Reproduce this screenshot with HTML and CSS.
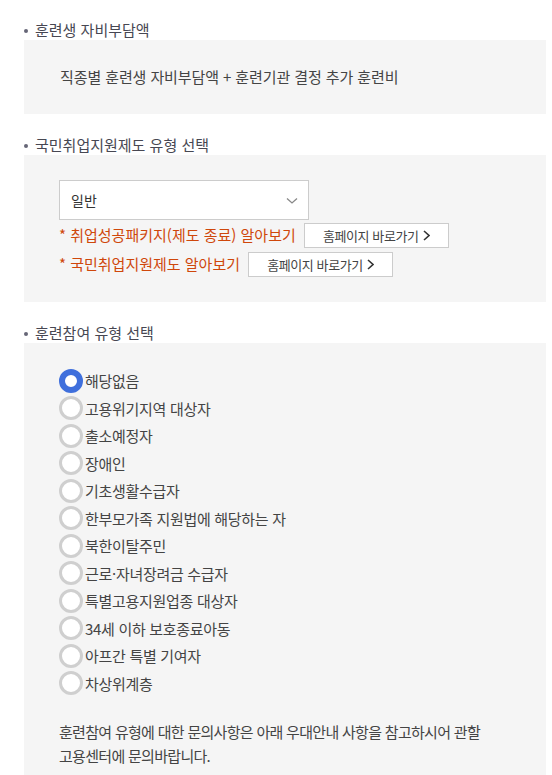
FILE: index.html
```html
<!DOCTYPE html>
<html lang="ko">
<head>
<meta charset="utf-8">
<link rel="stylesheet" href="styles.css">
</head>
<body>
<div class="page">
  <section class="sec sec-first">
    <h3 class="sec-title">훈련생 자비부담액</h3>
    <div class="box box-text">직종별 훈련생 자비부담액 + 훈련기관 결정 추가 훈련비</div>
  </section>

  <section class="sec">
    <h3 class="sec-title">국민취업지원제도 유형 선택</h3>
    <div class="box box-select">
      <div class="select">
        <span>일반</span>
        <svg class="chev" width="12" height="8" viewBox="0 0 12 8"><path d="M1 1.5 L6 6 L11 1.5" fill="none" stroke="#888" stroke-width="1.3"/></svg>
      </div>
      <div class="link-row">
        <span class="red">* 취업성공패키지(제도 종료) 알아보기</span>
        <button class="go">홈페이지 바로가기 <svg class="gt" width="7" height="11" viewBox="0 0 7 11"><path d="M1 1 L6 5.5 L1 10" fill="none" stroke="#333" stroke-width="1.6"/></svg></button>
      </div>
      <div class="link-row">
        <span class="red">* 국민취업지원제도 알아보기</span>
        <button class="go">홈페이지 바로가기 <svg class="gt" width="7" height="11" viewBox="0 0 7 11"><path d="M1 1 L6 5.5 L1 10" fill="none" stroke="#333" stroke-width="1.6"/></svg></button>
      </div>
    </div>
  </section>

  <section class="sec">
    <h3 class="sec-title">훈련참여 유형 선택</h3>
    <div class="box box-radio">
      <ul class="radios">
        <li><span class="radio checked"></span>해당없음</li>
        <li><span class="radio"></span>고용위기지역 대상자</li>
        <li><span class="radio"></span>출소예정자</li>
        <li><span class="radio"></span>장애인</li>
        <li><span class="radio"></span>기초생활수급자</li>
        <li><span class="radio"></span>한부모가족 지원법에 해당하는 자</li>
        <li><span class="radio"></span>북한이탈주민</li>
        <li><span class="radio"></span>근로·자녀장려금 수급자</li>
        <li><span class="radio"></span>특별고용지원업종 대상자</li>
        <li><span class="radio"></span>34세 이하 보호종료아동</li>
        <li><span class="radio"></span>아프간 특별 기여자</li>
        <li><span class="radio"></span>차상위계층</li>
      </ul>
      <p class="note">훈련참여 유형에 대한 문의사항은 아래 우대안내 사항을 참고하시어 관할 고용센터에 문의바랍니다.</p>
    </div>
  </section>
</div>
</body>
</html>
```

FILE: styles.css
```css
* { box-sizing: border-box; }
html, body { margin: 0; padding: 0; background: #fff; }
body {
  font-family: "Noto Sans CJK KR", "Noto Sans", sans-serif;
  color: #444;
  font-size: 15px;
}
.page { padding: 0 6px 0 24px; }
.sec { margin-top: 21px; }
.sec-first { margin-top: 20px; }
.sec-title {
  margin: 0;
  font-size: 15px;
  font-weight: 400;
  line-height: 20px;
  color: #474752;
  position: relative;
  padding-left: 11px;
}
.sec-title::before {
  content: "";
  position: absolute;
  left: 0;
  top: 9px;
  width: 4px;
  height: 4px;
  border-radius: 50%;
  background: #667;
}
.box { background: #f5f5f5; }
.box-text {
  padding: 27px 36px;
  line-height: 20px;
  font-size: 15px;
  letter-spacing: -0.1px;
  color: #444;
}
.box-select { padding: 25px 35px 24px; }
.select {
  width: 250px;
  height: 40px;
  background: #fff;
  border: 1px solid #ccc;
  display: flex;
  align-items: center;
  justify-content: space-between;
  padding: 0 10px 0 11px;
  font-size: 14px;
  color: #333;
}
.chev { margin-top: 1px; }
.link-row {
  display: flex;
  align-items: center;
  gap: 8px;
  height: 28px;
  margin-top: 1px;
}
.red { color: #cf470b; font-size: 15px; line-height: 20px; }
.go {
  height: 25px;
  width: 145px;
  border: 1px solid #ccc;
  background: #fff;
  font-family: inherit;
  font-size: 13px;
  letter-spacing: -0.4px;
  color: #444;
  padding: 0;
  display: flex;
  align-items: center;
  justify-content: center;
  gap: 4px;
}
.gt { display: block; }
.box-radio { padding: 24px 35px 10px; }
.radios { list-style: none; margin: 0; padding: 0; }
.radios li {
  display: flex;
  align-items: center;
  height: 27.5px;
  font-size: 15px;
  letter-spacing: -0.3px;
  color: #444;
  gap: 2px;
}
.radio {
  width: 24px;
  height: 24px;
  border-radius: 50%;
  background: #fff;
  border: 3px solid #cfcfcf;
  flex: none;
}
.radio.checked { border: 6px solid #3f6fdc; }
.note {
  margin: 23px 0 0;
  line-height: 24px;
  font-size: 15px;
  letter-spacing: -0.7px;
  color: #444;
  padding-right: 30px;
}
```
